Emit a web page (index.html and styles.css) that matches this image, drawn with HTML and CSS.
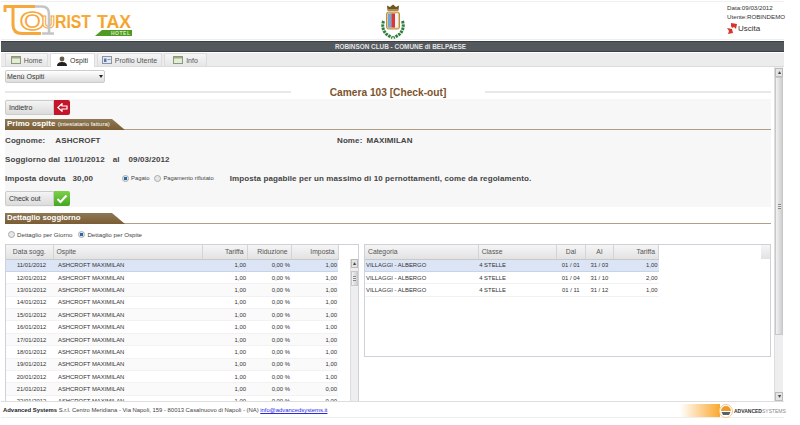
FILE: index.html
```html
<!DOCTYPE html>
<html lang="it">
<head>
<meta charset="utf-8">
<title>Tourist Tax Hotel</title>
<link rel="stylesheet" href="styles.css">
</head>
<body>
<div class="app">
  <header class="top">
    <div class="logo">
      <svg class="logo-svg" width="135" height="36" viewBox="0 0 135 36">
        <defs>
          <linearGradient id="og" x1="0" y1="0" x2="0" y2="1"><stop offset="0" stop-color="#f8b040"/><stop offset="1" stop-color="#f39a1c"/></linearGradient>
        </defs>
        <text x="19" y="28" class="logo-o" textLength="25" lengthAdjust="spacingAndGlyphs">O</text>
        <text x="41" y="26" class="logo-u" textLength="13" lengthAdjust="spacingAndGlyphs">U</text>
        <path d="M33 4.500H41Q48 4.500 48 12V31M41 31.500H53" fill="none" stroke="#c4c6c6" stroke-width="2.600"/>
        <path d="M4 10V4.500H34M12 4.500V23Q12 31.500 21 31.500H40" fill="none" stroke="#f6a83c" stroke-width="3"/>
        <text x="54" y="26" class="logo-t" textLength="36" lengthAdjust="spacingAndGlyphs">RIST</text>
        <text x="96" y="26" class="logo-t" textLength="34" lengthAdjust="spacingAndGlyphs">TAX</text>
        <path d="M94 34 L101 28H131V34Z" fill="#4f9a22"/>
        <text x="110" y="33" class="logo-h">HOTEL</text>
      </svg>
    </div>
    <div class="crest">
      <svg width="26" height="36" viewBox="0 0 26 36">
        <path d="M7.500 7L7 2.500 10 4 13 1.500 16 4 19 2.500 18.500 7Z" fill="#6e5526"/>
        <rect x="7.500" y="6" width="11" height="2" fill="#b08c44"/>
        <path d="M3.500 18C1 26 5 32 12.500 34.500M22.500 18C25 26 21 32 13.500 34.500" fill="none" stroke="#2f7f3c" stroke-width="3" stroke-dasharray="2.500 .8"/>
        <rect x="6.500" y="9" width="13" height="17" rx="2" fill="#e8c68a" stroke="#b5914f"/>
        <rect x="8" y="10.500" width="3.500" height="14" fill="#6fa8d8"/>
        <rect x="11.500" y="10.500" width="3.500" height="14" fill="#d8383c"/>
        <rect x="15" y="10.500" width="3" height="14" fill="#f2f2f2"/>
      </svg>
    </div>
    <div class="user">
      <div>Data:09/03/2012</div>
      <div>Utente:ROBINDEMO</div>
      <div class="logout">
        <svg width="10" height="11" viewBox="0 0 10 11"><path d="M4 0L10 1 9 6 7 4 5 5 4 3ZM0 5L5 6 6 10 1 11 2 8Z" fill="#d9342b"/></svg>
        <span>Uscita</span>
      </div>
    </div>
  </header>

  <div class="titlebar">ROBINSON CLUB - COMUNE di BELPAESE</div>

  <nav class="tabs">
    <div class="tab tab-home"><svg class="tab-ic" width="10" height="8" viewBox="0 0 10 8"><rect x=".5" y=".5" width="9" height="7" fill="#e6ead8" stroke="#8a9a78"/><rect x="1" y="1" width="8" height="1.500" fill="#9ab07c"/></svg>Home</div>
    <div class="tab tab-active"><svg class="tab-ic" width="10" height="10" viewBox="0 0 10 10"><circle cx="5" cy="3" r="2.400" fill="#6a5a48"/><path d="M0 10C0 6.500 3 6 5 6S10 6.500 10 10Z" fill="#222"/></svg>Ospiti</div>
    <div class="tab tab-prof"><svg class="tab-ic" width="10" height="8" viewBox="0 0 10 8"><rect x=".5" y=".5" width="9" height="7" fill="#e4e8f0" stroke="#8a94a8"/><rect x="2" y="2.500" width="2.500" height="3.500" fill="#5a78b0"/><rect x="5.500" y="3" width="3" height="1" fill="#8a94a8"/></svg>Profilo Utente</div>
    <div class="tab tab-info"><svg class="tab-ic" width="10" height="8" viewBox="0 0 10 8"><rect x=".5" y=".5" width="9" height="7" fill="#e6ead8" stroke="#8a9a78"/><rect x="1" y="1" width="8" height="1.500" fill="#9ab07c"/></svg>Info</div>
  </nav>

  <main class="content">
    <div class="page">
      <div class="menu-row">
        <div class="menu-wrap"><select class="menu"><option>Menù Ospiti</option></select></div>
      </div>
      <div class="heading">
        <span class="heading-line"></span>
        <h1>Camera 103 [Check-out]</h1>
        <span class="heading-line"></span>
      </div>

      <div class="panel">
        <div class="btn">
          <span class="btn-label">Indietro</span>
          <span class="btn-ic btn-red"><svg width="11" height="9" viewBox="0 0 11 9"><path d="M5 .8L.8 4.500 5 8.200V6H10V3H5Z" fill="none" stroke="#fff" stroke-width="1.200"/></svg></span>
        </div>

        <div class="section section-first">
          <div class="section-tab">Primo ospite <small>(intestatario fattura)</small></div>
        </div>

        <div class="info-row info-names">
          <div class="field-a"><b>Cognome:</b><b class="val">ASHCROFT</b></div>
          <div class="field-b"><b>Nome:</b><b class="val2">MAXIMILAN</b></div>
        </div>
        <div class="info-row info-stay">
          <b>Soggiorno dal</b><b class="s1">11/01/2012</b><b class="s2">al</b><b class="s3">09/03/2012</b>
        </div>
        <div class="info-row info-tax">
          <b>Imposta dovuta</b><b class="t1">30,00</b>
          <label class="radio radio-pay"><span class="dot dot-on"></span>Pagato</label>
          <label class="radio radio-ref"><span class="dot"></span>Pagamento rifiutato</label>
          <b class="t2">Imposta pagabile per un massimo di 10 pernottamenti, come da regolamento.</b>
        </div>

        <div class="btn btn-check">
          <span class="btn-label">Check out</span>
          <span class="btn-ic btn-green"><svg width="12" height="10" viewBox="0 0 12 10"><path d="M1.500 5L4.500 8 10.500 1.500" fill="none" stroke="#fff" stroke-width="2"/></svg></span>
        </div>
      </div>

      <div class="section section-second">
        <div class="section-tab">Dettaglio soggiorno</div>
      </div>

      <div class="radios">
        <label class="radio"><span class="dot"></span>Dettaglio per Giorno</label>
        <label class="radio"><span class="dot dot-on"></span>Dettaglio per Ospite</label>
      </div>

      <div class="grids">
        <div class="grid grid-left">
          <div class="grid-main">
            <table class="tbl tbl-left">
              <thead><tr><th class="c-date">Data sogg.</th><th class="l c-name">Ospite</th><th class="r c-t">Tariffa</th><th class="r c-rid">Riduzione</th><th class="r c-imp">Imposta</th></tr></thead>
              <tbody>
                <tr class="sel"><td class="c">11/01/2012</td><td>ASHCROFT MAXIMILAN</td><td class="r">1,00</td><td class="r p">0,00 %</td><td class="r">1,00</td></tr>
                <tr><td class="c">12/01/2012</td><td>ASHCROFT MAXIMILAN</td><td class="r">1,00</td><td class="r p">0,00 %</td><td class="r">1,00</td></tr>
                <tr class="alt"><td class="c">13/01/2012</td><td>ASHCROFT MAXIMILAN</td><td class="r">1,00</td><td class="r p">0,00 %</td><td class="r">1,00</td></tr>
                <tr><td class="c">14/01/2012</td><td>ASHCROFT MAXIMILAN</td><td class="r">1,00</td><td class="r p">0,00 %</td><td class="r">1,00</td></tr>
                <tr class="alt"><td class="c">15/01/2012</td><td>ASHCROFT MAXIMILAN</td><td class="r">1,00</td><td class="r p">0,00 %</td><td class="r">1,00</td></tr>
                <tr><td class="c">16/01/2012</td><td>ASHCROFT MAXIMILAN</td><td class="r">1,00</td><td class="r p">0,00 %</td><td class="r">1,00</td></tr>
                <tr class="alt"><td class="c">17/01/2012</td><td>ASHCROFT MAXIMILAN</td><td class="r">1,00</td><td class="r p">0,00 %</td><td class="r">1,00</td></tr>
                <tr><td class="c">18/01/2012</td><td>ASHCROFT MAXIMILAN</td><td class="r">1,00</td><td class="r p">0,00 %</td><td class="r">1,00</td></tr>
                <tr class="alt"><td class="c">19/01/2012</td><td>ASHCROFT MAXIMILAN</td><td class="r">1,00</td><td class="r p">0,00 %</td><td class="r">1,00</td></tr>
                <tr><td class="c">20/01/2012</td><td>ASHCROFT MAXIMILAN</td><td class="r">1,00</td><td class="r p">0,00 %</td><td class="r">1,00</td></tr>
                <tr class="alt"><td class="c">21/01/2012</td><td>ASHCROFT MAXIMILAN</td><td class="r">1,00</td><td class="r p">0,00 %</td><td class="r">0,00</td></tr>
                <tr><td class="c">22/01/2012</td><td>ASHCROFT MAXIMILAN</td><td class="r">1,00</td><td class="r p">0,00 %</td><td class="r">0,00</td></tr>
              </tbody>
            </table>
          </div>
          <div class="vbar vbar-small">
            <span class="sb-btn">▴</span>
            <span class="sb-thumb"><span class="sb-grip"></span></span>
          </div>
        </div>

        <div class="grid grid-right">
          <table class="tbl tbl-right">
            <thead><tr><th class="l c-cat">Categoria</th><th class="l c-cl">Classe</th><th class="c-dal">Dal</th><th class="c-al">Al</th><th class="r c-tar">Tariffa</th></tr></thead>
            <tbody>
              <tr class="sel"><td>VILLAGGI - ALBERGO</td><td>4 STELLE</td><td class="c">01 / 01</td><td class="c">31 / 03</td><td class="r">1,00</td></tr>
              <tr><td>VILLAGGI - ALBERGO</td><td>4 STELLE</td><td class="c">01 / 04</td><td class="c">31 / 10</td><td class="r">2,00</td></tr>
              <tr><td>VILLAGGI - ALBERGO</td><td>4 STELLE</td><td class="c">01 / 11</td><td class="c">31 / 12</td><td class="r">1,00</td></tr>
            </tbody>
          </table>
          <span class="corner"></span>
        </div>
      </div>
    </div>

    <div class="vbar vbar-main">
      <span class="sb-btn">▴</span>
      <span class="sb-thumb"><span class="sb-grip"></span></span>
      <span class="sb-track"></span>
      <span class="sb-btn">▾</span>
    </div>
  </main>

  <footer class="foot">
    <div class="foot-text"><b>Advanced Systems</b> S.r.l. Centro Meridiana - Via Napoli, 159 - 80013 Casalnuovo di Napoli - (NA) <a href="#">info@advancedsystems.it</a></div>
    <div class="brand">
      <span class="brand-fade"></span>
      <svg class="brand-ic" width="14" height="14" viewBox="0 0 14 14"><circle cx="7" cy="7" r="6.500" fill="#fff" stroke="#f3c98a"/><path d="M2 7A5 5 0 0 1 12 7Z" fill="#f09a2a"/><path d="M2.500 8H11.500L10 11H4Z" fill="#5a6068"/></svg>
      <span class="brand-name"><b>ADVANCED</b>SYSTEMS</span>
    </div>
  </footer>
</div>
</body>
</html>
```
FILE: styles.css
```css
* { box-sizing: border-box; }
html, body { margin: 0; padding: 0; background: #fff; }
body { font-family: "Liberation Sans", Arial, sans-serif; font-size: 7px; color: #333; }
.app { width: 783px; height: 425px; padding-top: 1px; margin-left: 1px; }

.top { height: 39px; display: flex; border-top: 1px solid #f0f0f0; border-bottom: 1px solid #eee; }
.logo { width: 140px; flex: none; }
.logo-svg { display: block; }
.logo-o { font: bold 26px "Liberation Sans", sans-serif; fill: #fff; stroke: #f6a83c; stroke-width: 1.500; }
.logo-u { font: bold 17px "Liberation Sans", sans-serif; fill: #fff; stroke: #f6a83c; stroke-width: 1; }
.logo-t { font: bold 18px "Liberation Sans", sans-serif; fill: url(#og); }
.logo-h { font: bold 5px "Liberation Sans", sans-serif; fill: #d8ecc0; letter-spacing: .5px; }
.crest { margin-left: 239px; margin-right: auto; padding-top: 1px; }
.user { width: 57px; padding-top: .5px; font-size: 6.200px; line-height: 9.500px; color: #333; }
.logout { display: flex; align-items: center; gap: 1px; font-size: 8px; line-height: 12px; margin-top: 1px; color: #333; }

.titlebar { margin-top: 1px; height: 11px; background: #53585c; border-top: 1px solid #3c4044; border-bottom: 1px solid #3c4044; color: #e4e4e4; font-size: 6.400px; font-weight: bold; line-height: 9px; text-align: center; padding-left: 16px; }

.tabs { margin-top: 1px; height: 14px; background: #ececec; border-bottom: 1px solid #dcdcdc; display: flex; padding-left: 4px; gap: 2px; }
.tab { height: 13px; background: linear-gradient(#f6f6f6, #e6e6e6); border: 1px solid #dcdcdc; border-bottom: 0; border-radius: 2px 2px 0 0; display: flex; align-items: center; justify-content: center; gap: 3px; font-size: 7px; color: #555; }
.tab-ic { flex: none; }
.tab-home { width: 43px; }
.tab-active { width: 45px; height: 14px; background: #fff; color: #333; }
.tab-prof { width: 65px; }
.tab-info { width: 43px; }

.content { height: 335px; display: flex; overflow: hidden; border-bottom: 1px solid #ddd; }
.page { width: 773px; padding: 0 3px 0 4px; overflow: hidden; }
.menu-row { height: 16px; padding-top: 3px; }
.menu-wrap { position: relative; width: 100px; }
.menu-wrap::after { content: ""; position: absolute; right: 2px; top: 5px; border: 2.500px solid transparent; border-top: 3px solid #222; border-bottom: 0; }
.menu { display: block; width: 100px; height: 13px; font: 7px "Liberation Sans", sans-serif; color: #333; background: linear-gradient(#fff, #ddd); border: 1px solid #ccc; border-radius: 2px; padding: 0 0 0 1px; appearance: none; }
.heading { height: 16px; display: flex; align-items: center; }
.heading-line { flex: 1; height: 2px; background: #e8e8e8; margin-top: 1px; }
.heading h1 { width: 194px; margin: 4px 0 0; font-size: 10.200px; line-height: 12px; font-weight: bold; text-align: center; color: #7d532c; }
.panel { height: 108px; background: #f7f7f7; padding-top: 1px; }

.btn { width: 65px; height: 15px; display: flex; }
.btn-label { flex: 1; padding-left: 3px; line-height: 13px; font-size: 7px; color: #333; background: linear-gradient(#f4f4f4, #dcdcdc); border: 1px solid #ccc; border-radius: 2px 0 0 2px; }
.btn-ic { width: 16px; display: flex; align-items: center; justify-content: center; border-radius: 0 2px 2px 0; }
.btn-red { background: #c4152a; }
.btn-green { background: linear-gradient(#7ed04a, #44a820); }
.btn-check { margin-top: 7px; }

.section { height: 11px; border-bottom: 1px solid #b09f84; }
.section-first { margin-top: 4px; }
.section-second { margin-top: 6px; }
.section-tab { width: 120px; height: 11px; padding-left: 2px; color: #fff; font-size: 8px; font-weight: bold; line-height: 10px; white-space: nowrap; background: linear-gradient(#8d7a55, #7a5c34); clip-path: polygon(0 0, 107px 0, 120px 100%, 0 100%); }
.section-tab small { font-size: 6px; font-weight: normal; }
.section-second .section-tab { font-size: 7.800px; }

.info-row { display: flex; align-items: center; font-size: 8px; color: #444; }
.info-row b { font-weight: bold; letter-spacing: .1px; }
.info-names { height: 13px; margin-top: 4px; }
.field-a { width: 332px; }
.val { margin-left: 10px; }
.val2 { margin-left: 4px; }
.info-stay { margin-top: 6px; height: 12px; }
.s1 { margin-left: 4px; }
.s2 { margin-left: 8px; }
.s3 { margin-left: 9px; }
.info-tax { margin-top: 7px; height: 12px; }
.t1 { margin-left: 7px; }
.t2 { margin-left: 16px; }
.radio { display: flex; align-items: center; gap: 2px; font-size: 5.800px; color: #444; }
.radio-pay { margin-left: 29px; }
.radio-ref { margin-left: 5px; }
.dot { width: 7px; height: 7px; border-radius: 50%; border: 1px solid #aaa; background: #e8e8e8; display: inline-block; }
.dot-on { background: radial-gradient(circle, #2a6aa8 0 40%, #dfe8f0 50%); }

.radios { height: 20px; display: flex; align-items: center; gap: 6px; padding-left: 3px; }
.radios .radio { font-size: 6.200px; }
.grids { display: flex; gap: 5px; align-items: flex-start; }
.grid { border: 1px solid #d0d0d8; background: #fff; display: flex; align-items: flex-start; }
.grid-left { width: 354px; height: 170px; }
.grid-main { width: 344px; }
.grid-right { width: 407px; height: 113px; position: relative; }
.tbl { border-collapse: collapse; table-layout: fixed; font-size: 5.900px; color: #333; }
.tbl-left { width: 332px; }
.tbl-right { width: 294px; }
.tbl th { height: 14px; padding: 0 3px; font-weight: normal; font-size: 6.800px; color: #555; background: linear-gradient(#f5f5f5, #e2e2e2); border-right: 1px solid #d4d4d4; border-bottom: 1px solid #c8c8c8; text-align: center; }
.tbl th.l { text-align: left; }
.tbl th.r { text-align: right; }
.tbl td { height: 12.400px; padding: 0 1px 0 5px; border-bottom: 1px solid #f2f2f2; white-space: nowrap; overflow: hidden; }
.tbl-right td { padding-left: 1px; }
.tbl td.c { text-align: center; }
.tbl td.r { text-align: right; }
.tbl td.p { padding-right: 1px; }
.tbl tr.sel td { background: #dbe5f5; border-bottom-color: #c6d4ea; }
.tbl tr.alt td { background: #fafafa; }
.c-date { width: 47px; }
.c-name { width: 149px; }
.c-t { width: 45px; }
.c-rid { width: 44px; }
.c-imp { width: 47px; }
.c-cat { width: 113px; }
.c-cl { width: 78px; }
.c-dal { width: 29px; }
.c-al { width: 28px; }
.c-tar { width: 45px; }
.corner { position: absolute; right: 0; top: 0; width: 9px; height: 14px; background: linear-gradient(#f5f5f5, #e2e2e2); }

.vbar { display: flex; flex-direction: column; background: #eee; border-left: 1px solid #ddd; }
.vbar-small { width: 8px; height: 155px; margin-top: 14px; }
.vbar-main { width: 9px; height: 100%; padding-top: 1px; }
.sb-btn { display: block; flex: none; height: 9px; background: #e4e4e4; border: 1px solid #bbb; color: #444; font-size: 6px; line-height: 7px; text-align: center; }
.sb-thumb { display: flex; align-items: center; justify-content: center; flex: none; background: linear-gradient(90deg, #f2f2f2, #cfcfcf); border: 1px solid #c8c8c8; }
.sb-grip { width: 3px; height: 5px; background: repeating-linear-gradient(#888 0 1px, #eee 1px 2px); }
.vbar-small .sb-thumb { height: 15px; margin-top: 3px; }
.vbar-main .sb-thumb { height: 258px; }
.sb-track { flex: 1; }

.foot { height: 14px; margin-top: 2px; display: flex; justify-content: space-between; align-items: stretch; border-bottom: 1px solid #eee; }
.foot-text { font-size: 5.900px; line-height: 13px; padding-left: 2px; color: #444; }
.foot-text b { color: #222; }
.foot-text a { color: #2a2ae0; }
.brand { display: flex; align-items: center; font-size: 5px; color: #888; }
.brand-fade { width: 40px; height: 100%; background: linear-gradient(90deg, #fff, #fba82e); }
.brand-ic { margin-left: -1px; margin-right: 1px; }
.brand-name { width: 50px; }
.brand-name b { color: #333; }
```
